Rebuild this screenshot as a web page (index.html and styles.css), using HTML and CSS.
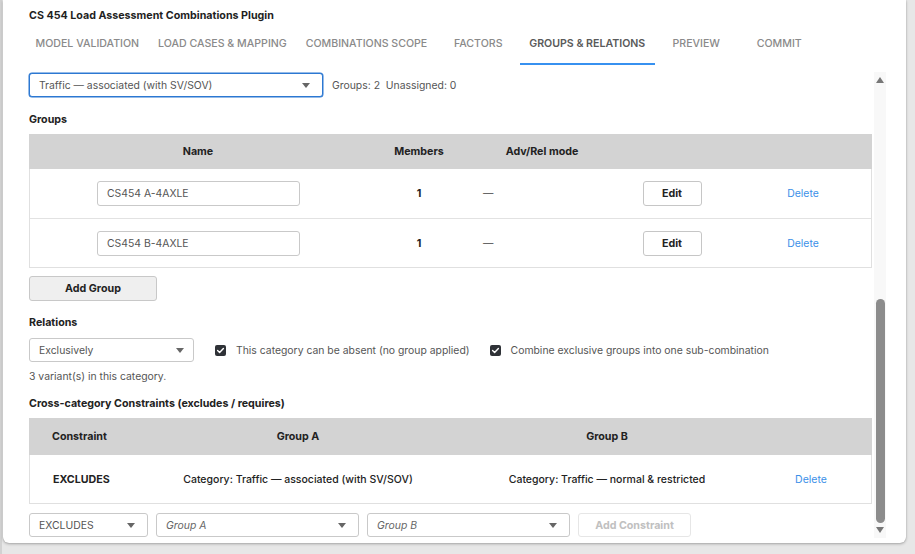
FILE: index.html
```html
<!DOCTYPE html>
<html>
<head>
<meta charset="utf-8">
<link rel="stylesheet" href="styles.css">
</head>
<body>
<div class="stage">
  <div class="dialog">
    <div class="title">CS 454 Load Assessment Combinations Plugin</div>
    <div class="tabs">
      <div class="tab">MODEL VALIDATION</div>
      <div class="tab">LOAD CASES &amp; MAPPING</div>
      <div class="tab">COMBINATIONS SCOPE</div>
      <div class="tab">FACTORS</div>
      <div class="tab active">GROUPS &amp; RELATIONS</div>
      <div class="tab">PREVIEW</div>
      <div class="tab">COMMIT</div>
    </div>
    <div class="body">
      <div class="content">
        <div class="toprow">
          <div class="select main-select"><span>Traffic — associated (with SV/SOV)</span><i class="caret"></i></div>
          <span class="meta">Groups: 2&nbsp;&nbsp;Unassigned: 0</span>
        </div>

        <div class="heading h-groups">Groups</div>
        <div class="table groups">
          <div class="grow ghead">
            <div class="c center">Name</div>
            <div class="c center">Members</div>
            <div class="c center">Adv/Rel mode</div>
            <div class="c"></div>
            <div class="c"></div>
          </div>
          <div class="grow gbody">
            <div class="c center"><div class="input">CS454 A-4AXLE</div></div>
            <div class="c center bold">1</div>
            <div class="c dash">—</div>
            <div class="c center"><div class="btn-edit">Edit</div></div>
            <div class="c center link del1">Delete</div>
          </div>
          <div class="grow gbody">
            <div class="c center"><div class="input">CS454 B-4AXLE</div></div>
            <div class="c center bold">1</div>
            <div class="c dash">—</div>
            <div class="c center"><div class="btn-edit">Edit</div></div>
            <div class="c center link del1">Delete</div>
          </div>
        </div>
        <div class="btn-add">Add Group</div>

        <div class="heading h-rel">Relations</div>
        <div class="relrow">
          <div class="select rel-select"><span>Exclusively</span><i class="caret"></i></div>
          <label class="check first"><span class="box"><svg width="9" height="9" viewBox="0 0 9 9"><path d="M1.6 4.6 L3.6 6.5 L7.4 2.4" fill="none" stroke="#fff" stroke-width="1.4" stroke-linecap="round" stroke-linejoin="round"/></svg></span><span>This category can be absent (no group applied)</span></label>
          <label class="check second"><span class="box"><svg width="9" height="9" viewBox="0 0 9 9"><path d="M1.6 4.6 L3.6 6.5 L7.4 2.4" fill="none" stroke="#fff" stroke-width="1.4" stroke-linecap="round" stroke-linejoin="round"/></svg></span><span>Combine exclusive groups into one sub-combination</span></label>
        </div>
        <div class="note">3 variant(s) in this category.</div>

        <div class="heading h-cross">Cross-category Constraints (excludes / requires)</div>
        <div class="table cons">
          <div class="crow chead">
            <div class="c left">Constraint</div>
            <div class="c center">Group A</div>
            <div class="c center">Group B</div>
            <div class="c"></div>
          </div>
          <div class="crow cbody">
            <div class="c left bold">EXCLUDES</div>
            <div class="c center">Category: Traffic — associated (with SV/SOV)</div>
            <div class="c center">Category: Traffic — normal &amp; restricted</div>
            <div class="c center link del2">Delete</div>
          </div>
        </div>

        <div class="addrow">
          <div class="select s-type"><span>EXCLUDES</span><i class="caret"></i></div>
          <div class="select s-group"><span class="ph">Group A</span><i class="caret"></i></div>
          <div class="select s-group"><span class="ph">Group B</span><i class="caret"></i></div>
          <div class="btn-disabled">Add Constraint</div>
        </div>
      </div>
      <div class="scrollbar">
        <i class="arrow up"></i>
        <div class="track"><div class="thumb"></div></div>
        <i class="arrow down"></i>
      </div>
    </div>
  </div>
</div>
</body>
</html>
```

FILE: styles.css
```css
* { box-sizing: border-box; }
html, body { margin: 0; padding: 0; }
body {
  background: #e7e7e7;
  font-family: Inter, "Noto Sans", "Liberation Sans", sans-serif;
  font-size: 10.4px;
  color: #333;
  width: 915px;
  height: 554px;
  overflow: hidden;
}
.stage {
  height: 554px;
  padding-left: 3px;
  border-left: 2px solid #d2d2d2;
}
.dialog {
  width: 903px;
  height: 543px;
  margin-left: -2px;
  background: #fff;
  border-radius: 0 0 6px 6px;
  box-shadow: 0 1px 3px rgba(0,0,0,0.28), 0 0 1px rgba(0,0,0,0.25);
  display: flex;
  flex-direction: column;
}
.title {
  padding: 9px 0 0 26px;
  line-height: 14px;
  font-weight: 700;
  font-size: 10.7px;
  color: #1f1f1f;
}
.tabs {
  display: flex;
  margin-left: 23px;
  height: 42px;
}
.tab {
  min-width: 83px;
  padding: 0 9.5px;
  display: flex;
  align-items: center;
  justify-content: center;
  color: #8a8a8a;
  font-weight: 500;
  font-size: 10.6px;
  border-bottom: 2px solid transparent;
}
.tab.active {
  color: #5a5a5a;
  font-weight: 600;
  border-bottom-color: #3791f0;
}
.body {
  flex: 1;
  display: flex;
}
.content {
  width: 871px;
  padding: 8px 2px 0 26px;
}
.toprow { display: flex; align-items: center; height: 24px; }
.select {
  height: 24px;
  border: 1px solid #c9c9c9;
  border-radius: 3px;
  display: flex;
  align-items: center;
  justify-content: space-between;
  padding: 0 12px 0 9px;
  color: #555;
  background: #fff;
}
.main-select {
  width: 294px;
  border-color: #2c78d2;
  box-shadow: 0 0 0 0.5px #2c78d2;
}
.caret {
  width: 0; height: 0;
  border-left: 4.5px solid transparent;
  border-right: 4.5px solid transparent;
  border-top: 5px solid #666;
}
.meta { margin-left: 9px; color: #555; }

.heading { font-weight: 700; font-size: 10.7px; color: #222; line-height: 14px; }
.h-groups { margin-top: 16px; }
.h-rel { margin-top: 15px; }
.h-cross { margin-top: 13px; }

.table {
  width: 843px;
  border: 1px solid #e0e0e0;
  border-top: 0;
  margin-top: 8px;
}
.groups { margin-top: 7px; }
.grow {
  display: grid;
  grid-template-columns: 337px 104px 142px 118px 140px;
}
.ghead { height: 35px; background: #d3d3d3; font-weight: 700; font-size: 10.7px; color: #222; margin: 0 -1px; grid-template-columns: 338px 104px 142px 118px 141px; }
.gbody { height: 49px; border-top: 1px solid #e2e2e2; }
.ghead + .gbody { border-top: 0; }
.c { display: flex; align-items: center; }
.center { justify-content: center; }
.left { padding-left: 23px; }
.bold { font-weight: 700; font-size: 10.7px; color: #222; }
.dash { padding-left: 12px; color: #444; }
.link { color: #3b8fe8; }
.del1 { padding-left: 4px; }
.input {
  width: 203px;
  height: 25px;
  border: 1px solid #c9c9c9;
  border-radius: 3px;
  display: flex;
  align-items: center;
  padding-left: 9px;
  color: #555;
}
.btn-edit {
  width: 59px;
  height: 25px;
  border: 1px solid #c6c6c6;
  border-radius: 3px;
  display: flex;
  align-items: center;
  justify-content: center;
  font-weight: 700;
  font-size: 10.7px;
  color: #222;
}
.btn-add {
  width: 128px;
  height: 25px;
  margin-top: 8px;
  border: 1px solid #c8c8c8;
  border-radius: 3px;
  background: #efefef;
  display: flex;
  align-items: center;
  justify-content: center;
  font-weight: 700;
  font-size: 10.7px;
  color: #222;
}
.relrow { display: flex; align-items: center; margin-top: 8px; height: 24px; }
.rel-select { width: 165px; padding-right: 9px; }
.check { display: flex; align-items: center; color: #555; }
.check.first { margin-left: 21px; }
.check.second { margin-left: 20px; }
.box {
  width: 11px; height: 11px;
  border-radius: 2px;
  background: #2f3237;
  display: flex;
  align-items: center;
  justify-content: center;
  margin-right: 10px;
}
.box svg { display: block; }
.note { margin-top: 8px; line-height: 14px; color: #555; }

.cons { margin-top: 7px; }
.crow {
  display: grid;
  grid-template-columns: 121px 294px 324px 102px;
}
.chead { height: 37px; background: #d3d3d3; font-weight: 700; font-size: 10.7px; color: #222; margin: 0 -1px; grid-template-columns: 122px 294px 324px 103px; }
.cbody { height: 48px; color: #222; font-weight: 500; font-size: 10.5px; }
.del2 { padding-right: 18px; font-weight: 400; }

.addrow { display: flex; gap: 8px; margin-top: 9px; height: 24px; }
.s-type { width: 119px; padding-right: 12px; }
.s-group { width: 203px; }
.ph { font-style: italic; color: #666; }
.btn-disabled {
  width: 113px;
  border: 1px solid #e6e6e6;
  border-radius: 3px;
  display: flex;
  align-items: center;
  justify-content: center;
  font-weight: 700;
  font-size: 10.7px;
  color: #c0c0c0;
}

.scrollbar {
  width: 12px;
  margin-top: 7px;
  margin-bottom: 5px;
  background: #f8f8f8;
  display: flex;
  flex-direction: column;
  align-items: center;
  padding: 5px 0 5px;
}
.arrow {
  width: 0; height: 0;
  border-left: 4px solid transparent;
  border-right: 4px solid transparent;
}
.arrow.up { border-bottom: 6px solid #777; }
.arrow.down { border-top: 6px solid #777; }
.track {
  flex: 1;
  width: 100%;
  display: flex;
  flex-direction: column;
  justify-content: flex-end;
  align-items: center;
  padding: 4px 0;
}
.thumb {
  width: 9px;
  height: 224px;
  border-radius: 5px;
  background: #8c8c8c;
}
```
